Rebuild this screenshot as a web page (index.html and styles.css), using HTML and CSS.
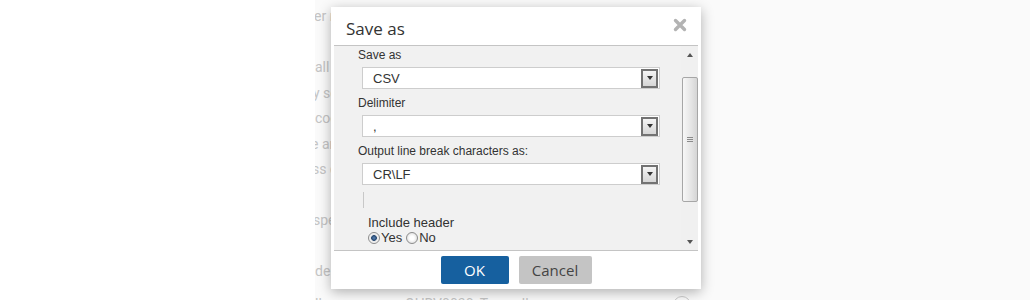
FILE: index.html
```html
<!DOCTYPE html>
<html lang="en">
<head>
    <meta charset="UTF-8">
    <meta name="viewport" content="width=device-width, initial-scale=1.0">
    <title>Save as</title>
    <link rel="stylesheet" href="styles.css">
</head>
<body>
    <div class="page">
        <p class="ln" style="text-indent:-1px">er rows</p>
        <p class="ln">&nbsp;</p>
        <p class="ln">all col</p>
        <p class="ln" style="text-indent:-2px">y sep</p>
        <p class="ln">cookies</p>
        <p class="ln" style="text-indent:-4px">e and</p>
        <p class="ln" style="text-indent:-3px">ss det</p>
        <p class="ln">&nbsp;</p>
        <p class="ln" style="text-indent:-2px">specif</p>
        <p class="ln">&nbsp;</p>
        <p class="ln">de</p>
        <div class="ln-row">
            <span class="ln-cell">ll</span>
            <span class="ln-code">OHRV0030_Tamzall</span>
            <span class="ln-info">i</span>
        </div>
    </div>

    <div class="dialog">
        <div class="dialog-head">
            <span class="dialog-title">Save as</span>
            <span class="dialog-close">
                <svg width="14" height="14" viewBox="0 0 14 14">
                    <path d="M2.5 2.5 L11.5 11.5 M11.5 2.5 L2.5 11.5" stroke="#b3b3b3" stroke-width="3.4" stroke-linecap="round"/>
                </svg>
            </span>
        </div>

        <div class="dialog-body">
            <div class="form">
                <div class="field-label">Save as</div>
                <div class="select"><span class="select-value">CSV</span><span class="select-btn"></span></div>

                <div class="field-label">Delimiter</div>
                <div class="select"><span class="select-value">,</span><span class="select-btn"></span></div>

                <div class="field-label">Output line break characters as:</div>
                <div class="select"><span class="select-value">CR\LF</span><span class="select-btn"></span></div>

                <div class="empty-field"></div>

                <div class="group-label">Include header</div>
                <div class="radios">
                    <span class="radio checked"></span>Yes
                    <span class="radio"></span>No
                </div>
            </div>
            <div class="scrollbar">
                <div class="sb-arrow"><span class="tri-up"></span></div>
                <div class="sb-track">
                    <div class="sb-thumb"><span class="grip"></span></div>
                </div>
                <div class="sb-arrow"><span class="tri-down"></span></div>
            </div>
        </div>

        <div class="dialog-foot">
            <button class="btn btn-ok">OK</button>
            <button class="btn btn-cancel">Cancel</button>
        </div>
    </div>
</body>
</html>
```

FILE: styles.css
```css
body {
    margin: 0;
    background-color: #fff;
    font-family: "Liberation Sans", Arial, sans-serif;
    overflow: hidden;
}
.page {
    margin-left: 315px;
    height: 300px;
    background-color: #fafafa;
    overflow: hidden;
    padding-top: 4px;
    font-family: Roboto, "Liberation Sans", sans-serif;
    font-size: 14px;
    color: #c4c4c4;
}
.ln {
    margin: 0;
    line-height: 25.5px;
    white-space: nowrap;
}
.ln-row {
    display: flex;
    align-items: center;
    line-height: 25px;
    margin-top: 7px;
    white-space: nowrap;
}
.ln-cell {
    width: 90px;
}
.ln-code {
    width: 268px;
}
.ln-info {
    width: 16px;
    height: 16px;
    border: 1px solid #ccc;
    border-radius: 50%;
    font-size: 11px;
    line-height: 16px;
    text-align: center;
    margin-top: 2px;
}

.dialog {
    position: absolute;
    left: 331px;
    top: 7px;
    width: 370px;
    height: 282px;
    background-color: #fff;
    box-shadow: 0 3px 12px rgba(0, 0, 0, 0.3);
    display: flex;
    flex-direction: column;
}
.dialog-head {
    height: 38px;
    display: flex;
    justify-content: space-between;
    align-items: flex-start;
    padding: 0 14px 0 15px;
}
.dialog-title {
    font-family: "Open Sans", sans-serif;
    font-size: 17px;
    line-height: 20px;
    color: #333;
    margin-top: 12px;
}
.dialog-close {
    margin-top: 11px;
    width: 14px;
    height: 14px;
}
.dialog-body {
    margin: 0 3px;
    height: 204px;
    border-top: 1px solid #c4c4c4;
    border-bottom: 1px solid #c4c4c4;
    background-color: #f1f1f1;
    display: flex;
}
.form {
    flex: 1;
    overflow: hidden;
    padding: 2px 0 0 24px;
    color: #333;
}
.field-label {
    font-size: 12px;
    line-height: 15px;
    margin-bottom: 4px;
}
.select {
    box-sizing: border-box;
    width: 298px;
    height: 22px;
    margin: 0 0 7px 4px;
    background-color: #fff;
    border: 1px solid #cdcdcd;
    display: flex;
    justify-content: space-between;
    align-items: center;
}
.select-value {
    font-size: 13px;
    padding-left: 10px;
}
.select-btn {
    box-sizing: border-box;
    width: 17px;
    height: 19px;
    margin-right: 1px;
    border: 2px solid #727272;
    background: linear-gradient(#f4f4f4, #d6d6d6);
    display: flex;
    justify-content: center;
    align-items: center;
}
.select-btn::after {
    content: "";
    border-left: 3.5px solid transparent;
    border-right: 3.5px solid transparent;
    border-top: 4px solid #333;
}
.empty-field {
    width: 0;
    height: 16px;
    margin-left: 5px;
    border-left: 1px solid #c8c8c8;
    margin-bottom: 7px;
}
.group-label {
    font-size: 13px;
    line-height: 15px;
    margin-left: 10px;
}
.radios {
    font-size: 13px;
    line-height: 15px;
    margin-left: 10px;
    display: flex;
    align-items: center;
}
.radio {
    box-sizing: border-box;
    width: 12px;
    height: 12px;
    border: 1px solid #8c8c8c;
    border-radius: 50%;
    background: radial-gradient(circle, #fff 0, #fff 2px, #dcdcdc 6px);
    margin-right: 1px;
}
.radios .radio:nth-of-type(2) {
    margin-left: 4px;
}
.radio.checked {
    background: radial-gradient(circle, #5d86b8 0, #24466f 2.5px, #e6e6e6 3.2px, #fff 6px);
}

.scrollbar {
    width: 17px;
    display: flex;
    flex-direction: column;
    background-color: #f0f0f0;
}
.sb-arrow {
    height: 17px;
    display: flex;
    justify-content: center;
    align-items: center;
}
.tri-up {
    border-left: 3.5px solid transparent;
    border-right: 3.5px solid transparent;
    border-bottom: 4px solid #555;
}
.tri-down {
    border-left: 3.5px solid transparent;
    border-right: 3.5px solid transparent;
    border-top: 4px solid #555;
}
.sb-track {
    flex: 1;
}
.sb-thumb {
    box-sizing: border-box;
    height: 125px;
    margin: 14px 0 0 1px;
    border: 1px solid #a6a6a6;
    border-radius: 2px;
    background: linear-gradient(to right, #f7f7f7, #e4e4e4 60%, #d5d5d5);
    display: flex;
    justify-content: center;
    align-items: center;
}
.grip {
    width: 6px;
    height: 5px;
    background: repeating-linear-gradient(#8a8a8a 0, #8a8a8a 1px, transparent 1px, transparent 2px);
}

.dialog-foot {
    flex: 1;
    display: flex;
    justify-content: center;
    align-items: flex-start;
    gap: 10px;
    padding-top: 5px;
}
.btn {
    height: 28px;
    border: none;
    border-radius: 2px;
    font-family: "Open Sans", sans-serif;
    font-size: 15px;
    cursor: pointer;
}
.btn-ok {
    width: 68px;
    background-color: #16609f;
    color: #fff;
}
.btn-cancel {
    width: 73px;
    background-color: #c4c4c4;
    color: #444;
}
```
